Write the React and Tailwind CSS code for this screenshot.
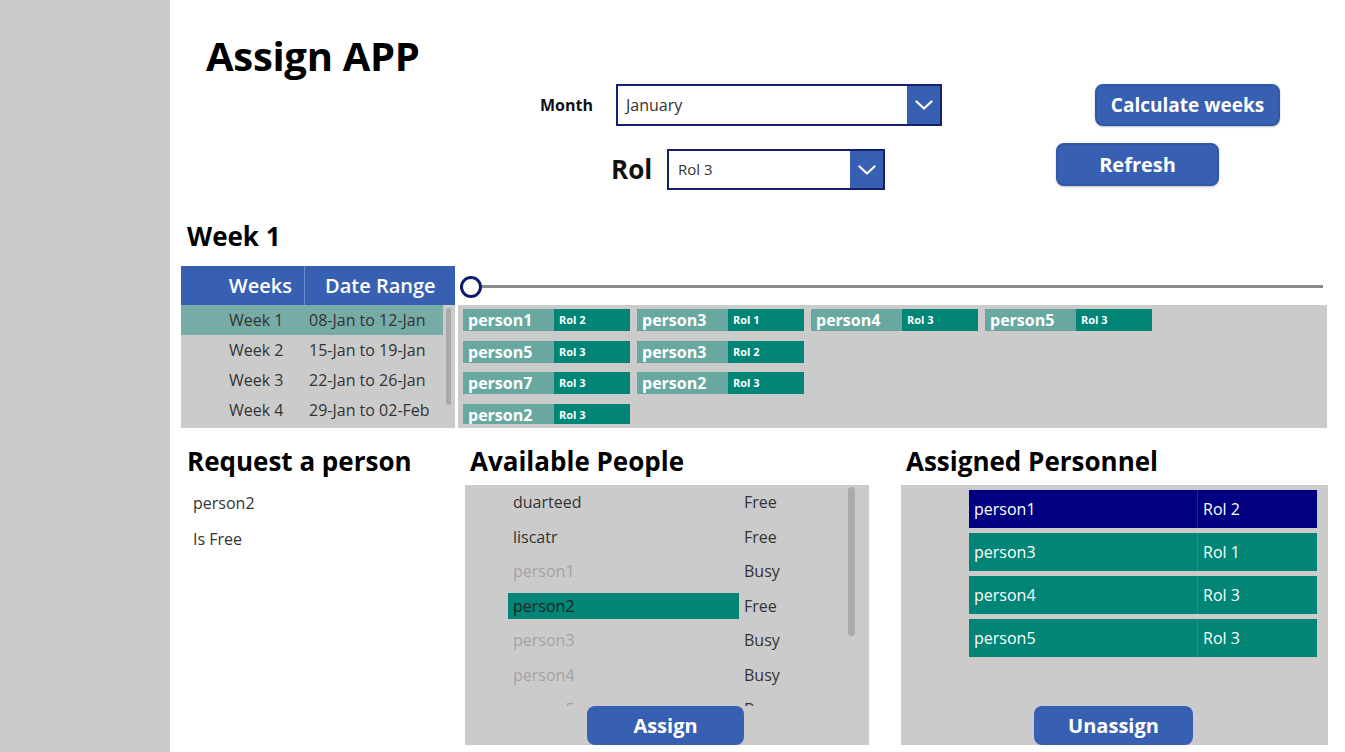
import React from "react";

function Chevron() {
  return (
    <svg width="18" height="10" viewBox="0 0 18 10">
      <polyline points="1.5,1.5 9,8.5 16.5,1.5" fill="none" stroke="white" strokeWidth="2.2" strokeLinecap="round" strokeLinejoin="round" />
    </svg>
  );
}

function Dropdown({ boxCls, text, textCls }) {
  return (
    <div className={"flex border-2 border-[#16206f] bg-white " + boxCls}>
      <div className={"flex-1 flex items-center text-[#333] " + textCls}>{text}</div>
      <div className="w-[33px] bg-[#3860b2] flex items-center justify-center">
        <Chevron />
      </div>
    </div>
  );
}

const weeks = [
  ["Week 1", "08-Jan to 12-Jan"],
  ["Week 2", "15-Jan to 19-Jan"],
  ["Week 3", "22-Jan to 26-Jan"],
  ["Week 4", "29-Jan to 02-Feb"],
];

const cards = [
  ["person1", "Rol 2"],
  ["person3", "Rol 1"],
  ["person4", "Rol 3"],
  ["person5", "Rol 3"],
  ["person5", "Rol 3"],
  ["person3", "Rol 2"],
  null,
  null,
  ["person7", "Rol 3"],
  ["person2", "Rol 3"],
  null,
  null,
  ["person2", "Rol 3"],
];

const available = [
  ["duarteed", "Free", false, false],
  ["liscatr", "Free", false, false],
  ["person1", "Busy", true, false],
  ["person2", "Free", false, true],
  ["person3", "Busy", true, false],
  ["person4", "Busy", true, false],
  ["person5", "Busy", true, false],
];

const assigned = [
  ["person1", "Rol 2", true],
  ["person3", "Rol 1", false],
  ["person4", "Rol 3", false],
  ["person5", "Rol 3", false],
];

export default function App() {
  return (
    <div className="flex w-[1345px] h-[752px] overflow-hidden bg-white font-['Open_Sans',sans-serif] text-black">
      <div className="w-[170px] h-full bg-[#cbcbcb] shrink-0" />
      <div className="flex-1 flex flex-col">
        {/* Title */}
        <div className="pt-[32px] pl-[36px] h-[80px]">
          <div className="text-[40px] leading-[48px] font-bold tracking-[-0.3px]">Assign APP</div>
        </div>

        {/* Month row */}
        <div className="mt-[4px] h-[42px] flex items-stretch">
          <div className="ml-[370px] w-[76px] flex items-center text-[16px] font-bold text-[#111]">Month</div>
          <Dropdown boxCls="w-[326px] h-[42px]" text="January" textCls="pl-[8px] text-[16px]" />
          <button className="ml-[153px] w-[185px] h-[42px] rounded-[8px] bg-[#3860b2] border-2 border-[#3058a8] shadow-[0_1px_2px_rgba(0,0,0,0.25)] text-white text-[19px] font-bold">
            Calculate weeks
          </button>
        </div>

        {/* Rol row */}
        <div className="mt-[17px] h-[47px] flex items-start">
          <div className="ml-[441px] mt-[6px] w-[56px] h-[41px] flex items-center text-[26px] font-bold text-[#111]">Rol</div>
          <div className="mt-[6px]">
            <Dropdown boxCls="w-[218px] h-[41px]" text="Rol 3" textCls="pl-[9px] text-[15px]" />
          </div>
          <button className="ml-[171px] w-[163px] h-[43px] rounded-[8px] bg-[#3860b2] border-2 border-[#3058a8] shadow-[0_1px_2px_rgba(0,0,0,0.25)] text-white text-[20px] font-bold">
            Refresh
          </button>
        </div>

        {/* Week 1 */}
        <div className="mt-[30px] ml-[17px] text-[26px] leading-[32px] font-bold">Week 1</div>

        {/* Table + gallery */}
        <div className="mt-[14px] h-[162px] flex">
          <div className="ml-[11px] w-[274px] h-[162px] bg-[#cbcbcb] flex flex-col">
            <div className="h-[39px] bg-[#3860b2] flex text-white text-[20px] font-semibold">
              <div className="w-[124px] flex items-center justify-end pr-[12px] border-r border-[#6a8bcc]">Weeks</div>
              <div className="flex-1 flex items-center pl-[20px]">Date Range</div>
            </div>
            <div className="relative flex-1">
              {weeks.map((w, i) => (
                <div key={i} className={"h-[30px] w-[262px] flex items-center text-[16px] text-[#333] " + (i === 0 ? "bg-[#77aba6]" : "")}>
                  <div className="w-[124px] pl-[48px]">{w[0]}</div>
                  <div className="pl-[4px] whitespace-nowrap">{w[1]}</div>
                </div>
              ))}
              <div className="absolute left-[265px] top-[3px] w-[5px] h-[97px] rounded-full bg-[#a9a9a9]" />
            </div>
          </div>
          <div className="ml-[3px] w-[869px] flex flex-col">
            <div className="h-[39px] flex items-center pt-[2px]">
              <div className="ml-[2px] w-[22px] h-[22px] rounded-full border-[3px] border-[#101a6c] bg-white shrink-0" />
              <div className="flex-1 h-[3px] bg-[#8a8a8a] mr-[4px]" />
            </div>
            <div className="h-[123px] bg-[#cbcbcb] pl-[5px] pt-[4px]">
              <div className="h-[115px] overflow-hidden grid grid-cols-[repeat(4,167px)] auto-rows-[22px] gap-x-[7px] gap-y-[9.5px]">
                {cards.map((c, i) =>
                  c ? (
                    <div key={i} className="flex h-[22px]">
                      <div className="w-[91px] bg-[#68a8a1] text-white text-[16px] font-bold leading-[22px] pl-[5px]">{c[0]}</div>
                      <div className="flex-1 bg-[#008577] text-white text-[11px] font-bold leading-[22px] pl-[5px]">{c[1]}</div>
                    </div>
                  ) : (
                    <div key={i} />
                  )
                )}
              </div>
            </div>
          </div>
        </div>

        {/* Bottom row */}
        <div className="mt-[17px] flex">
          <div className="ml-[17px] w-[278px]">
            <div className="text-[26px] leading-[32px] font-bold">Request a person</div>
            <div className="mt-[14px] ml-[6px] text-[16px] leading-[24px] text-[#333]">person2</div>
            <div className="mt-[12px] ml-[6px] text-[16px] leading-[24px] text-[#333]">Is Free</div>
          </div>

          <div className="w-[404px]">
            <div className="ml-[5px] text-[26px] leading-[32px] font-bold">Available People</div>
            <div className="mt-[8px] h-[260px] bg-[#cbcbcb] flex flex-col">
              <div className="relative h-[221px] overflow-hidden">
                {available.map((a, i) => (
                  <div key={i} className="h-[34.5px] flex items-center text-[16px]">
                    <div className={"ml-[43px] w-[231px] h-[26px] px-[5px] flex items-center " + (a[3] ? "bg-[#008577] text-[#222]" : a[2] ? "text-[#a3a3a3]" : "text-[#333]")}>
                      {a[0]}
                    </div>
                    <div className="ml-[5px] text-[#333]">{a[1]}</div>
                  </div>
                ))}
                <div className="absolute left-[383px] top-[2px] w-[7px] h-[149px] rounded-full bg-[#aaaaaa]" />
              </div>
              <button className="ml-[122px] w-[157px] h-[39px] rounded-[8px] bg-[#3860b2] text-white text-[20px] font-bold">
                Assign
              </button>
            </div>
          </div>

          <div className="ml-[32px] w-[427px]">
            <div className="ml-[5px] text-[26px] leading-[32px] font-bold">Assigned Personnel</div>
            <div className="mt-[8px] h-[260px] bg-[#cbcbcb] flex flex-col">
              <div className="h-[221px] pt-[5px] pl-[68px] pr-[11px] flex flex-col gap-[5px]">
                {assigned.map((r, i) => (
                  <div key={i} className={"h-[38px] flex text-white text-[16px] " + (r[2] ? "bg-[#000080]" : "bg-[#008577]")}>
                    <div className="w-[229px] flex items-center pl-[5px] border-r border-[#ffffff22]">{r[0]}</div>
                    <div className="flex-1 flex items-center pl-[5px]">{r[1]}</div>
                  </div>
                ))}
              </div>
              <button className="ml-[133px] w-[159px] h-[39px] rounded-[8px] bg-[#3860b2] text-white text-[20px] font-bold">
                Unassign
              </button>
            </div>
          </div>
        </div>
      </div>
    </div>
  );
}
